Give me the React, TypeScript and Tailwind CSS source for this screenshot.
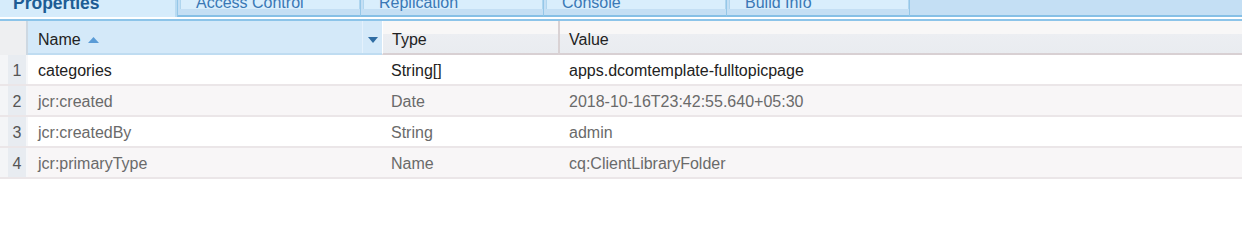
import React from "react";

const tabs = ["Access Control", "Replication", "Console", "Build Info"];

const rows = [
  { n: 1, name: "categories", type: "String[]", value: "apps.dcomtemplate-fulltopicpage" },
  { n: 2, name: "jcr:created", type: "Date", value: "2018-10-16T23:42:55.640+05:30" },
  { n: 3, name: "jcr:createdBy", type: "String", value: "admin" },
  { n: 4, name: "jcr:primaryType", type: "Name", value: "cq:ClientLibraryFolder" },
];

export default function App() {
  return (
    <div className="w-[1242px] h-[241px] bg-white overflow-hidden font-['Liberation_Sans',Arial,sans-serif]">
      {/* Tab strip, cut at the top */}
      <div className="flex h-[17px] bg-[#c4dff4] overflow-hidden">
        <div className="w-[177px] shrink-0 bg-[#d6ecfb] border-r-2 border-[#b9dbf2] pl-[13px]">
          <span className="block -mt-[6px] leading-[18px] text-[17.5px] font-bold text-[#1d5c94]">
            Properties
          </span>
        </div>
        {tabs.map((t) => (
          <div
            key={t}
            className="w-[183px] shrink-0 border-l border-b-2 border-[#95c7e8] border-b-[#86c0e6] pl-[2px]"
          >
            <div className="h-full border-x border-[#b0d6ef] bg-[#d9eefc] pl-[15px]">
              <span className="block -mt-[6px] leading-[18px] text-[16px] text-[#3a78b5]">
                {t}
              </span>
            </div>
          </div>
        ))}
        <div className="flex-1 border-l border-b-2 border-[#95c7e8] border-b-[#86c0e6]" />
      </div>
      <div className="h-[2px] bg-white" />
      <div className="h-[2px] bg-[#8cc4e9]" />

      {/* Grid header */}
      <div className="grid grid-cols-[28px_354px_176px_1fr] h-[34px] text-[16px] text-[#222]">
        <div className="bg-[#eeeff1] border-r-2 border-[#cdd8e2]" />
        <div className="flex bg-[#d4e9f9] border-b-2 border-[#bfdcf1]">
          <div className="flex flex-1 items-center pl-[10px] pt-[5px] gap-[7px]">
            <span>Name</span>
            <svg width="11" height="6" viewBox="0 0 11 6">
              <path d="M0 6 L5.5 0 L11 6 Z" fill="#5a9bd6" />
            </svg>
          </div>
          <div className="flex w-[20px] items-center justify-center pt-[5px] border-l border-[#e4f1fc]">
            <svg width="10" height="6" viewBox="0 0 10 6">
              <path d="M0 0 L10 0 L5 6 Z" fill="#2e6ca3" />
            </svg>
          </div>
        </div>
        <div className="flex items-center pl-[9px] pt-[5px] border-l border-white border-b-2 border-b-[#d8d0d3] bg-[linear-gradient(#f8f7f7_0%,#f8f7f7_40%,#eceef2_40%,#e9ecf0_100%)]">
          Type
        </div>
        <div className="flex items-center pl-[9px] pt-[5px] border-l-2 border-[#d9d2d4] border-b-2 border-b-[#d8d0d3] bg-[linear-gradient(#f8f7f7_0%,#f8f7f7_40%,#eceef2_40%,#e9ecf0_100%)]">
          Value
        </div>
      </div>

      {/* Rows */}
      {rows.map((r) => {
        const first = r.n === 1;
        const alt = r.n % 2 === 0;
        return (
          <div
            key={r.n}
            className={`grid grid-cols-[28px_354px_176px_1fr] h-[31px] border-b-2 border-[#ebe6e8] text-[16px] ${
              alt ? "bg-[#f8f6f7]" : "bg-white"
            } ${first ? "text-[#222]" : "text-[#6a6a6a]"}`}
          >
            <div className="flex items-center justify-center pt-[2px] border-l-[8px] border-l-[#f4f5f7] bg-[#e8ecf1] border-r-2 border-r-[#f6f7f9] text-[#555]">
              {r.n}
            </div>
            <div className="flex items-center pt-[2px] pl-[10px]">{r.name}</div>
            <div className="flex items-center pt-[2px] pl-[9px]">{r.type}</div>
            <div className="flex items-center pt-[2px] pl-[11px]">{r.value}</div>
          </div>
        );
      })}
    </div>
  );
}
